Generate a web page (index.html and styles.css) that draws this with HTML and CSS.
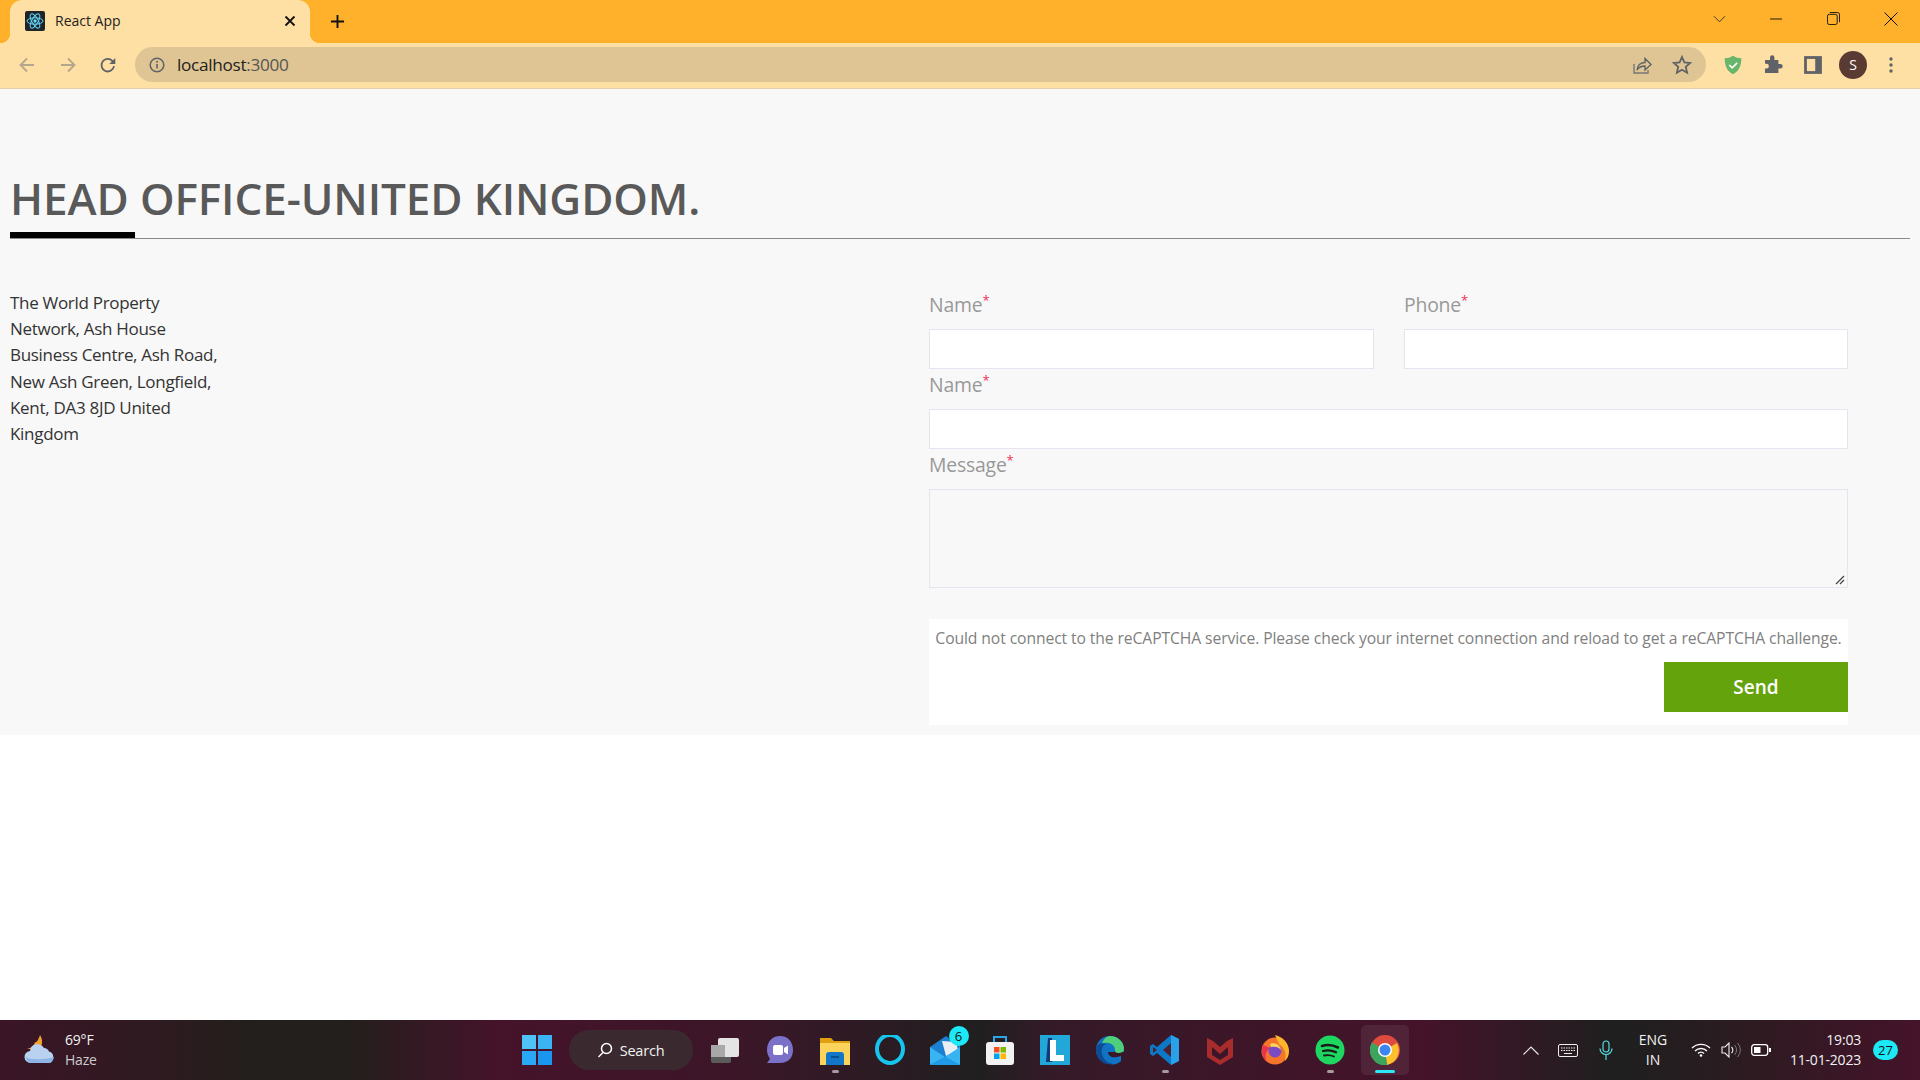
FILE: index.html

```html
<!DOCTYPE html>
<html lang="en">
<head>
  <meta charset="UTF-8" />
  <title>React App</title>
  <link rel="stylesheet" href="styles.css">
</head>
<body>
  <div class="tabstrip">
    <div class="tab">
      <svg class="favicon" viewBox="0 0 20 20">
        <rect width="20" height="20" rx="2" fill="#20232a"/>
        <g fill="none" stroke="#61dafb" stroke-width="1">
          <ellipse cx="10" cy="10" rx="8" ry="3.2"/>
          <ellipse cx="10" cy="10" rx="8" ry="3.2" transform="rotate(60 10 10)"/>
          <ellipse cx="10" cy="10" rx="8" ry="3.2" transform="rotate(120 10 10)"/>
        </g>
        <circle cx="10" cy="10" r="1.7" fill="#61dafb"/>
      </svg>
      <span class="tab-title">React App</span>
      <svg class="tab-close" viewBox="0 0 12 12"><path d="M1.5 1.5l9 9M10.500 1.500l-9 9" stroke="#111" stroke-width="1.800"/></svg>
    </div>
    <svg class="new-tab" viewBox="0 0 16 16"><path d="M8 1v14M1 8h14" stroke="#111" stroke-width="2"/></svg>
    <div class="window-btns">
      <svg class="win-chevron" viewBox="0 0 14 8"><path d="M1 1l6 6 6-6" fill="none" stroke="#333" stroke-width="1"/></svg>
      <svg class="win-min" viewBox="0 0 14 2"><path d="M0 1h13" stroke="#111" stroke-width="1"/></svg>
      <svg class="win-max" viewBox="0 0 14 14"><rect x=".5" y="2.500" width="10.500" height="11" rx="2" fill="none" stroke="#111"/><path d="M3 .5h8a2.500 2.500 0 0 1 2.500 2.500v8" fill="none" stroke="#111"/></svg>
      <svg class="win-close" viewBox="0 0 14 14"><path d="M.5.5l13 13M13.500.5l-13 13" stroke="#111" stroke-width="1"/></svg>
    </div>
  </div>

  <div class="toolbar">
    <svg class="nav-btn" viewBox="0 0 18 18"><path d="M16 9H2.500M9 2.500L2.500 9 9 15.500" fill="none" stroke="#b3a68c" stroke-width="1.800"/></svg>
    <svg class="nav-btn" viewBox="0 0 18 18"><path d="M2 9h13.500M9 2.500L15.500 9 9 15.500" fill="none" stroke="#b3a68c" stroke-width="1.800"/></svg>
    <svg class="nav-btn" viewBox="0 0 18 18"><path d="M15 10a6.300 6.300 0 1 1-1.700-5.200L15 6.500" fill="none" stroke="#5f6368" stroke-width="1.800"/><path d="M16.300 2v6h-6z" fill="#5f6368"/></svg>
    <div class="omnibox">
      <svg class="info-icon" viewBox="0 0 16 16"><circle cx="8" cy="8" r="6.800" fill="none" stroke="#5f6368" stroke-width="1.500"/><path d="M8 7v4.500" stroke="#5f6368" stroke-width="1.600"/><circle cx="8" cy="4.800" r="1" fill="#5f6368"/></svg>
      <span class="url">localhost<span class="url-port">:3000</span></span>
      <svg class="omni-icon omni-share" viewBox="0 0 20 20"><path d="M2 9v9h14v-3" fill="none" stroke="#777" stroke-width="1.400"/><path d="M5 15c.5-5 4-7.500 8-7.500V3.500l6 6-6 5.500v-4c-3.500 0-6 1-8 4z" fill="none" stroke="#5f6368" stroke-width="1.400"/></svg>
      <svg class="omni-icon" viewBox="0 0 20 20"><path d="M10 2l2.400 5.400 5.800.6-4.400 3.900 1.300 5.800L10 14.700l-5.100 3 1.300-5.800L1.800 8l5.800-.6z" fill="none" stroke="#5f6368" stroke-width="1.800"/></svg>
    </div>
    <svg class="ext-btn" viewBox="0 0 22 24"><path d="M11 1c3 2 6 3 10 3 0 9-3 16-10 19C4 20 1 13 1 4c4 0 7-1 10-3z" fill="#68b56c"/><path d="M6.500 12l3.500 3.500 6-6" fill="none" stroke="#fff" stroke-width="2"/></svg>
    <svg class="ext-btn" viewBox="0 0 20 20"><path d="M7 2.500a2.200 2.200 0 0 1 4.400 0V5h4v4h2a2.300 2.300 0 0 1 0 4.600h-2V18H2v-4.400h1.500a2.400 2.400 0 0 0 0-4.800H2V5h5z" fill="#5f6368"/></svg>
    <svg class="ext-btn" viewBox="0 0 18 18"><rect x="1" y="1" width="16" height="16" fill="#5f6368"/><rect x="3.500" y="3.500" width="7.500" height="11" fill="#fedfa4"/></svg>
    <div class="avatar">S</div>
    <svg class="menu-dots" viewBox="0 0 4 16"><circle cx="2" cy="2" r="1.700" fill="#5f6368"/><circle cx="2" cy="8" r="1.700" fill="#5f6368"/><circle cx="2" cy="14" r="1.700" fill="#5f6368"/></svg>
  </div>

  <main class="page">
    <h1 class="office-title">HEAD OFFICE-UNITED KINGDOM.</h1>
    <div class="title-rule"><div class="title-rule-bar"></div></div>
    <div class="office-row">
      <p class="address">The World Property Network, Ash House Business Centre, Ash Road, New Ash Green, Longfield, Kent, DA3 8JD United Kingdom</p>
      <form class="contact-form">
        <div class="two-cols">
          <div>
            <label class="field-label">Name<sup>*</sup></label>
            <input class="field" type="text">
          </div>
          <div>
            <label class="field-label">Phone<sup>*</sup></label>
            <input class="field" type="text">
          </div>
        </div>
        <label class="field-label">Name<sup>*</sup></label>
        <input class="field" type="text">
        <label class="field-label">Message<sup>*</sup></label>
        <div class="area-wrap">
          <textarea class="field field-area"></textarea>
          <svg class="resize-grip" viewBox="0 0 10 10"><path d="M1 9l8-8M5 9l4-4" stroke="#444" stroke-width="1.200"/></svg>
        </div>
        <div class="captcha-box">
          <p class="captcha-msg">Could not connect to the reCAPTCHA service. Please check your internet connection and reload to get a reCAPTCHA challenge.</p>
          <button class="send-btn" type="button">Send</button>
        </div>
      </form>
    </div>
  </main>
  <div class="page-rest"></div>

  <footer class="taskbar">
    <div class="weather">
      <svg class="weather-icon" viewBox="0 0 32 32">
        <path d="M16 1c3 5 3 10-1 14H3c4-1 7-3 8-7 1 1 3-1 5-7z" fill="#f0a030"/>
        <path d="M7 29a6 6 0 0 1-1-12A7.500 7.500 0 0 1 20 14a6 6 0 0 1 5 3.500A6 6 0 0 1 25 29z" fill="#b9d2ef"/>
        <path d="M2 23c4 3 18 3 28 0-1 4-3 6-5 6H7c-3 0-5-3-5-6z" fill="#8fb5e6"/>
      </svg>
      <div class="weather-text"><span>69°F</span><span class="weather-sub">Haze</span></div>
    </div>
    <div class="task-icons">
      <div class="task-app">
        <svg viewBox="0 0 30 30"><rect width="14" height="14" fill="#4fc3f7"/><rect x="16" width="14" height="14" fill="#3ab4f5"/><rect y="16" width="14" height="14" fill="#29a8f5"/><rect x="16" y="16" width="14" height="14" fill="#1a96f0"/></svg>
      </div>
      <div class="search-pill">
        <svg viewBox="0 0 16 16"><circle cx="9.500" cy="6.500" r="5" fill="none" stroke="#fff" stroke-width="1.500"/><path d="M6 10.500L1.500 15" stroke="#fff" stroke-width="1.500"/></svg>
        <span>Search</span>
      </div>
      <div class="task-app">
        <svg viewBox="0 0 30 30"><rect x="1" y="10" width="20" height="18" rx="2" fill="#5c5c5c"/><rect x="8" y="3" width="21" height="19" rx="2" fill="#e4e4e4"/><rect x="1" y="10" width="14" height="12" fill="#a8a8a8"/></svg>
      </div>
      <div class="task-app">
        <svg viewBox="0 0 30 30"><path d="M15 1c8 0 13 6 13 14s-5 13-13 13H2l3-4C3 21 2 18 2 15 2 7 7 1 15 1z" fill="#7b71c9"/><rect x="8" y="10" width="10" height="10" rx="2" fill="#fff"/><path d="M19 13l4-2.500v9L19 17z" fill="#fff"/></svg>
      </div>
      <div class="task-app task-running">
        <svg viewBox="0 0 30 30"><path d="M0 3h11l3 3h16v24H0z" fill="#e0a010"/><rect y="8" width="30" height="22" fill="#fcd45c"/><path d="M6 20a3 3 0 0 1 3-3h12a3 3 0 0 1 3 3v10H6z" fill="#1377c9"/><rect x="11" y="21" width="8" height="2" fill="#0b4f8c"/></svg>
      </div>
      <div class="task-app">
        <svg viewBox="0 0 30 30"><ellipse cx="15" cy="14" rx="13" ry="14" fill="none" stroke="#16c5ee" stroke-width="4"/><path d="M10 25l3 4 4-2z" fill="#16c5ee"/></svg>
      </div>
      <div class="task-app">
        <svg viewBox="0 0 30 30"><path d="M0 12L16 1l14 10v19H0z" fill="#1c7fd0"/><path d="M12 6l14 1 2 8-12 6z" fill="#e8eef2"/><path d="M0 12l15 10-15 8zM30 12v18L15 22z" fill="#38b4f2"/><path d="M0 30l15-8 15 8z" fill="#1f9ae6"/></svg>
        <span class="app-badge">6</span>
      </div>
      <div class="task-app">
        <svg viewBox="0 0 30 30"><path d="M9 7V2h12v5" fill="none" stroke="#2aa7e8" stroke-width="2"/><rect x="1" y="7" width="28" height="23" rx="3" fill="#f2f2f2"/><rect x="9" y="12" width="5.500" height="5.500" fill="#f25022"/><rect x="15.500" y="12" width="5.500" height="5.500" fill="#7fba00"/><rect x="9" y="18.500" width="5.500" height="5.500" fill="#00a4ef"/><rect x="15.500" y="18.500" width="5.500" height="5.500" fill="#ffb900"/></svg>
      </div>
      <div class="task-app">
        <svg viewBox="0 0 30 30"><rect width="30" height="30" fill="#21a8d8"/><path d="M8 3h4v24H6z" fill="#123a7a"/><path d="M10 5h6v15h8v6H10z" fill="#fff"/></svg>
      </div>
      <div class="task-app">
        <svg viewBox="0 0 30 30"><path d="M1 15C1 7 7 1 15 1c8 0 14 6 14 13v3H13c0 4 4 6 9 5l4-1v5c-3 3-7 4-11 3C7 28 1 23 1 15z" fill="#1173c4"/><path d="M15 1c8 0 14 6 14 13 0 3-3 4-6 4-2 0-3-1-3-3 0-6-8-9-13-6 1-4 4-8 8-8z" fill="#4fcf7a"/><path d="M1 15c0-5 5-8 10-6-4 2-5 6-4 10 1 5 5 9 11 10C9 31 1 24 1 15z" fill="#0d4c94"/></svg>
      </div>
      <div class="task-app task-running">
        <svg viewBox="0 0 30 30"><path d="M21 0l8 4v22l-8 4L7 18l-4 3-3-2v-8l3-2 4 3z" fill="#0b78c8"/><path d="M21 0l8 4v22l-8 4z" fill="#2aa0e8"/><path d="M21 8v14l-8-7z" fill="#4a2130"/><path d="M3 12l4 3-4 3z" fill="#4a2130"/></svg>
      </div>
      <div class="task-app">
        <svg viewBox="0 0 30 30"><path d="M15 30L2 22V3l6 3 7 6 7-6 6-3v19zM7 12v8l8 5 8-5v-8l-8 7z" fill="#a82c2c"/></svg>
      </div>
      <div class="task-app">
        <svg viewBox="0 0 30 30"><circle cx="15" cy="16" r="13.500" fill="#f5762a"/><path d="M15 0c8 2 14 8 14 16 0 5-2 8-4 10 2-8-1-14-6-17z" fill="#fdb52b"/><path d="M3 10c-2 6-1 13 4 17-3-6-1-11 3-14z" fill="#e8344f"/><circle cx="15" cy="16" r="6.500" fill="#7a4bc5"/><path d="M10 9c5-2 10 1 11 6-2-3-6-4-10-3z" fill="#fcd45c"/></svg>
      </div>
      <div class="task-app task-running">
        <svg viewBox="0 0 30 30"><circle cx="15" cy="15" r="14.500" fill="#1ed760"/><g fill="none" stroke="#1a1a1a" stroke-linecap="round"><path d="M7 11c5-1.500 11-1 16 1.500" stroke-width="2.600"/><path d="M8 16c4-1 9-.7 13 1.300" stroke-width="2.200"/><path d="M9 20.500c3.500-.8 7-.5 10 1" stroke-width="1.800"/></g></svg>
      </div>
      <div class="task-app task-active">
        <svg viewBox="0 0 30 30"><circle cx="15" cy="15" r="15" fill="#dd4b3e"/><path d="M15 15L27 8a15 15 0 0 1-10 22z" fill="#fbc02d"/><path d="M15 15l2 15A15 15 0 0 1 2 7.500z" fill="#3ba55d"/><circle cx="15" cy="15" r="7" fill="#fff"/><circle cx="15" cy="15" r="5.500" fill="#3d85ee"/></svg>
      </div>
    </div>
    <div class="tray">
      <svg class="tray-chevron" viewBox="0 0 16 9"><path d="M.5 8.500L8 1l7.500 7.500" fill="none" stroke="#eee" stroke-width="1.100"/></svg>
      <svg class="tray-keys" viewBox="0 0 20 13"><rect x=".5" y=".5" width="19" height="12" rx="1.500" fill="none" stroke="#eee"/><path d="M3 4h14M3 6.500h14" stroke="#eee" stroke-dasharray="1.500 1"/><path d="M6 9.500h8" stroke="#eee"/></svg>
      <svg class="tray-mic" viewBox="0 0 14 20"><rect x="4" y="1" width="6" height="11" rx="3" fill="none" stroke="#56dbe2" stroke-width="1.200"/><path d="M1 8.500a6 6 0 0 0 12 0M7 15v5" fill="none" stroke="#56dbe2" stroke-width="1.200"/></svg>
      <div class="tray-lang"><span>ENG</span><span>IN</span></div>
      <svg class="tray-wifi" viewBox="0 0 20 14"><g fill="none" stroke="#fff" stroke-width="1.300"><path d="M1 5a13 13 0 0 1 18 0"/><path d="M4 8a8.500 8.500 0 0 1 12 0"/><path d="M7 10.500a4 4 0 0 1 6 0"/></g><circle cx="10" cy="12.500" r="1.300" fill="#fff"/></svg>
      <svg class="tray-sound" viewBox="0 0 20 16"><path d="M1 5h3l4-4v14l-4-4H1z" fill="none" stroke="#eee" stroke-width="1.100"/><path d="M10.500 5a4 4 0 0 1 0 6" fill="none" stroke="#eee" stroke-width="1.100"/><path d="M13.500 3a7 7 0 0 1 0 10M16.500 1a10 10 0 0 1 0 14" fill="none" stroke="#777" stroke-width="1"/></svg>
      <svg class="tray-batt" viewBox="0 0 20 12"><rect x=".7" y=".7" width="16" height="10.600" rx="2.500" fill="none" stroke="#fff" stroke-width="1.300"/><rect x="3" y="3" width="6.500" height="6" fill="#fff"/><rect x="18" y="4" width="2" height="4" fill="#fff"/></svg>
      <div class="tray-clock"><span>19:03</span><span>11-01-2023</span></div>
      <div class="notif-badge">27</div>
    </div>
  </footer>
</body>
</html>
```

FILE: styles.css

```css
* {
  box-sizing: border-box;
}
html, body {
  height: 100%;
}
body {
  margin: 0;
  display: flex;
  flex-direction: column;
  height: 1080px;
  overflow: hidden;
  background: #fff;
  font-family: 'Open Sans', 'Noto Sans', sans-serif;
}
svg {
  display: block;
  flex: none;
}

/* browser chrome */
.tabstrip {
  display: flex;
  align-items: center;
  height: 43px;
  padding-left: 10px;
  background: #ffb12c;
}
.tab {
  position: relative;
  display: flex;
  align-items: center;
  align-self: stretch;
  width: 300px;
  padding: 0 14px 2px 15px;
  background: #fedfa4;
  border-radius: 12px 12px 0 0;
}
.tab::before, .tab::after {
  content: "";
  position: absolute;
  bottom: 0;
  width: 10px;
  height: 10px;
}
.tab::before {
  left: -10px;
  background: radial-gradient(circle at 0 0, #ffb12c 10px, #fedfa4 10.500px);
}
.tab::after {
  right: -10px;
  background: radial-gradient(circle at 100% 0, #ffb12c 10px, #fedfa4 10.500px);
}
.favicon {
  width: 20px;
  height: 20px;
}
.tab-title {
  margin-left: 10px;
  font-size: 14px;
  color: #222;
  flex: 1;
}
.tab-close {
  width: 12px;
  height: 12px;
}
.new-tab {
  width: 15px;
  height: 15px;
  margin-left: 20px;
}
.window-btns {
  display: flex;
  align-items: center;
  margin-left: auto;
  padding-bottom: 6px;
}
.win-chevron {
  width: 13px;
  height: 8px;
}
.win-min {
  width: 13px;
  height: 2px;
  margin-left: 44px;
}
.win-max {
  width: 13px;
  height: 13px;
  margin-left: 44px;
}
.win-close {
  width: 14px;
  height: 14px;
  margin-left: 44px;
  margin-right: 22px;
}

.toolbar {
  display: flex;
  align-items: center;
  height: 46px;
  padding: 0 0 2px 18px;
  background: #fedfa4;
  border-bottom: 1px solid #e0cfa8;
}
.nav-btn {
  width: 18px;
  height: 18px;
  margin-right: 22.500px;
}
.nav-btn:nth-child(3) {
  margin-right: 18px;
}
.omnibox {
  display: flex;
  align-items: center;
  width: 1571px;
  height: 35px;
  padding: 0 14px 0 14px;
  background: #dfc594;
  border-radius: 18px;
}
.info-icon {
  width: 16px;
  height: 16px;
}
.url {
  margin-left: 12px;
  font-size: 17.200px;
  letter-spacing: -0.3px;
  color: #222;
  flex: 1;
}
.url-port {
  color: #555;
}
.omni-icon {
  width: 20px;
  height: 20px;
  margin-left: 20px;
}
.ext-btn {
  width: 20px;
  height: 20px;
  margin-left: 17px;
  margin-right: 3px;
}
.avatar {
  width: 28px;
  height: 28px;
  margin-left: 13px;
  border-radius: 50%;
  background: #5a3b33;
  color: #fff;
  font-size: 14px;
  line-height: 28px;
  text-align: center;
}
.menu-dots {
  width: 4px;
  height: 16px;
  margin-left: 22px;
}

/* page */
.page {
  height: 646px;
  padding: 80px 10px 0;
  background: #f8f8f8;
}
.office-title {
  margin: 0;
  font-size: 44px;
  font-weight: 600;
  line-height: 58px;
  letter-spacing: -0.1px;
  color: #595959;
}
.title-rule {
  height: 1px;
  margin-top: 11px;
  background: #8a8a8a;
}
.title-rule-bar {
  position: relative;
  top: -6px;
  width: 125px;
  height: 6px;
  background: #000;
}
.office-row {
  display: flex;
  justify-content: space-between;
  padding-top: 50px;
  padding-right: 62px;
}
.address {
  width: 215px;
  margin: 0;
  padding-top: 1px;
  font-size: 17px;
  line-height: 26.200px;
  letter-spacing: -0.3px;
  color: #333;
}
.contact-form {
  width: 919px;
}
.two-cols {
  display: grid;
  grid-template-columns: 445px 444px;
  gap: 30px;
}
.field-label {
  display: block;
  height: 40px;
  padding-top: 3px;
  font-size: 19.400px;
  line-height: 26px;
  letter-spacing: -0.2px;
  color: #999;
}
.field-label sup {
  color: #f0304f;
  font-size: 13px;
  line-height: 0;
}
.field {
  display: block;
  width: 100%;
  height: 40px;
  margin: 0;
  border: 1px solid #e3e6ee;
  background: #fff;
  border-radius: 0;
}
.area-wrap {
  position: relative;
}
.field-area {
  height: 99px;
  background: #f8f8f8;
  resize: none;
}
.resize-grip {
  position: absolute;
  right: 3px;
  bottom: 3px;
  width: 10px;
  height: 10px;
}
.captcha-box {
  display: flex;
  flex-direction: column;
  align-items: flex-end;
  height: 106px;
  margin-top: 31px;
  padding-top: 8px;
  background: #fff;
}
.captcha-msg {
  align-self: stretch;
  margin: 0;
  font-size: 15.700px;
  line-height: 22px;
  letter-spacing: -0.1px;
  color: #808080;
  text-align: center;
  white-space: nowrap;
}
.send-btn {
  width: 184px;
  height: 50px;
  margin-top: 13px;
  border: none;
  background: #65a30d;
  color: #fff;
  font: 600 19px 'Open Sans', sans-serif;
}
.page-rest {
  flex: 1;
}

/* taskbar */
.taskbar {
  display: flex;
  align-items: center;
  height: 60px;
  background: linear-gradient(90deg, #3b1526 0%, #2e1a20 8%, #231f1c 13%, #231f1c 18%, #45132a 26%, #3c1628 38%, #201f20 51%, #351a28 55%, #3c1628 64%, #45132a 74%, #1f1f1f 84%, #2a1c20 90%, #45132a 100%);
  color: #f2f2f2;
}
.weather {
  display: flex;
  align-items: center;
  width: 509px;
  padding-left: 24px;
}
.weather-icon {
  width: 32px;
  height: 32px;
}
.weather-text {
  display: flex;
  flex-direction: column;
  margin-left: 9px;
  font-size: 14px;
  line-height: 20px;
  letter-spacing: -0.2px;
}
.weather-sub {
  color: #ccc;
}
.task-icons {
  display: flex;
  align-items: center;
}
.task-app {
  position: relative;
  display: flex;
  align-items: center;
  justify-content: center;
  width: 55px;
  height: 50px;
  border-radius: 5px;
}
.task-app svg {
  width: 30px;
  height: 30px;
}
.task-running::after, .task-active::after {
  content: "";
  position: absolute;
  bottom: 2px;
  width: 7px;
  height: 3px;
  border-radius: 2px;
  background: #a89aa0;
}
.task-active {
  width: 48px;
  margin: 0 3.500px;
  background: rgba(255,255,255,0.07);
}
.task-active::after {
  width: 20px;
  background: #2ce8f5;
}
.app-badge {
  position: absolute;
  top: 1px;
  right: 4px;
  width: 20px;
  height: 20px;
  border-radius: 50%;
  background: #1de9f6;
  color: #111;
  font-size: 13px;
  line-height: 20px;
  text-align: center;
}
.search-pill {
  display: flex;
  align-items: center;
  justify-content: center;
  width: 124px;
  height: 40px;
  margin: 0 5px 0 4.500px;
  border-radius: 20px;
  background: #3a2a30;
  font-size: 14.500px;
  letter-spacing: -0.2px;
  color: #f2f2f2;
}
.search-pill svg {
  width: 16px;
  height: 16px;
  margin-right: 7px;
}
.tray {
  display: flex;
  align-items: center;
  margin-left: auto;
  padding-right: 22px;
}
.tray-chevron {
  width: 16px;
  height: 9px;
}
.tray-keys {
  width: 20px;
  height: 13px;
  margin-left: 19px;
}
.tray-mic {
  width: 14px;
  height: 20px;
  margin-left: 21px;
}
.tray-lang {
  display: flex;
  flex-direction: column;
  align-items: center;
  width: 30px;
  margin-left: 25px;
  font-size: 14px;
  line-height: 20px;
}
.tray-wifi {
  width: 20px;
  height: 14px;
  margin-left: 23px;
}
.tray-sound {
  width: 20px;
  height: 16px;
  margin-left: 10px;
}
.tray-batt {
  width: 20px;
  height: 12px;
  margin-left: 10px;
}
.tray-clock {
  display: flex;
  flex-direction: column;
  align-items: flex-end;
  width: 90px;
  font-size: 14px;
  line-height: 20px;
  letter-spacing: -0.2px;
}
.notif-badge {
  width: 25px;
  height: 20px;
  margin-left: 12px;
  border-radius: 10px;
  background: #1de9f6;
  color: #111;
  font-size: 13px;
  line-height: 20px;
  text-align: center;
}
```
